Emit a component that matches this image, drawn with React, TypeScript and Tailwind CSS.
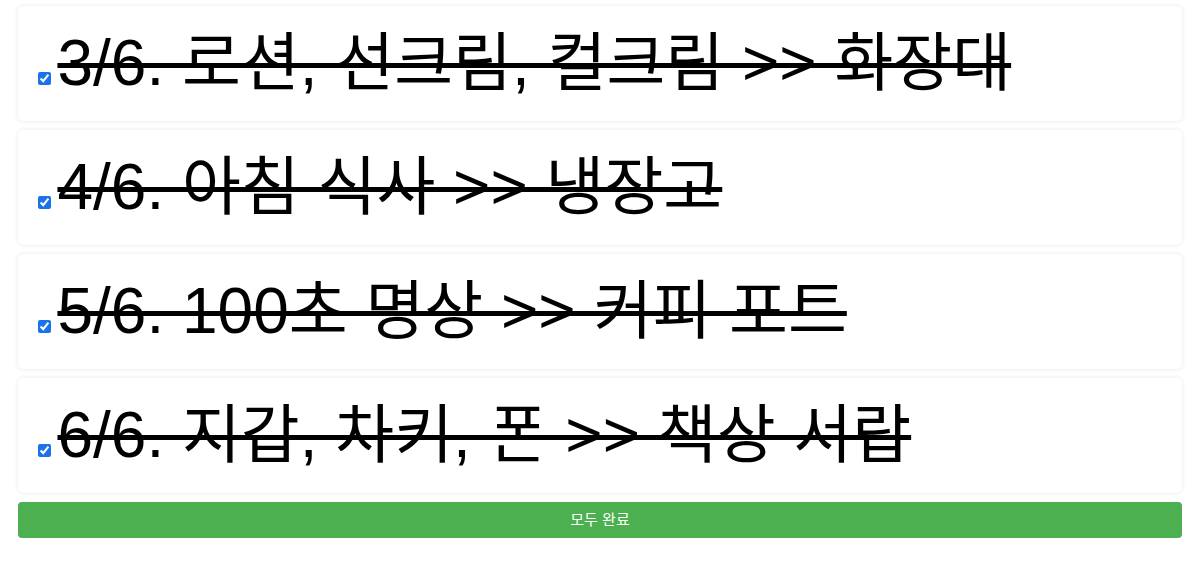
import React, { useState } from "react";

const initialTasks = [
  { id: 3, text: "3/6. 로션, 선크림, 컬크림 >> 화장대" },
  { id: 4, text: "4/6. 아침 식사 >> 냉장고" },
  { id: 5, text: "5/6. 100초 명상 >> 커피 포트" },
  { id: 6, text: "6/6. 지갑, 차키, 폰 >> 책상 서랍" },
];

const App = () => {
  const [done, setDone] = useState<Record<number, boolean>>({
    3: true,
    4: true,
    5: true,
    6: true,
  });

  const toggle = (id: number) => {
    setDone({ ...done, [id]: !done[id] });
  };

  const completeAll = () => {
    const all: Record<number, boolean> = {};
    initialTasks.forEach((t) => (all[t.id] = true));
    setDone(all);
  };

  return (
    <div
      className="min-h-screen bg-white px-[18px] pt-[6px] flex flex-col gap-[9px]"
      style={{ fontFamily: '"Liberation Sans", "Noto Sans CJK KR", sans-serif' }}
    >
      {initialTasks.map((task) => (
        <div
          key={task.id}
          className="bg-white rounded-[5px] shadow-[0_0_4px_rgba(0,0,0,0.1)] pl-[16px] pt-[20px] h-[115px]"
        >
          <label className="whitespace-nowrap text-[16px] text-black">
            <input
              type="checkbox"
              checked={!!done[task.id]}
              onChange={() => toggle(task.id)}
              className="ml-[4px] mr-[2px] w-[13px] h-[13px] accent-[#1a73e8] align-baseline"
            />{" "}
            <span
              className={
                "text-[64px] leading-[75px] " +
                (done[task.id] ? "line-through decoration-[5px]" : "")
              }
            >
              {task.text}
            </span>
          </label>
        </div>
      ))}
      <button
        onClick={completeAll}
        className="h-[36px] w-full rounded-[4px] bg-[#4caf50] text-white text-[15px]"
      >
        모두 완료
      </button>
    </div>
  );
};

export default App;
